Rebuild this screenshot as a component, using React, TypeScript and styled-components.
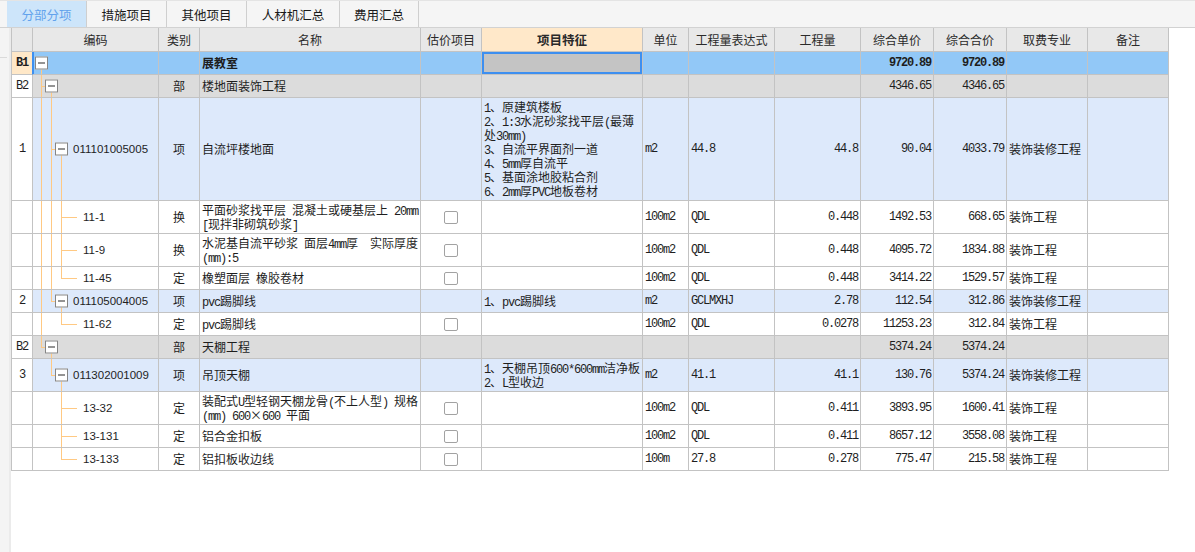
import React from "react"
import styled, { createGlobalStyle } from "styled-components"

const GlobalStyle = createGlobalStyle`
  html, body {
    margin: 0;
    padding: 0;
    background: #fff;
  }
  body {
    font-family: "Noto Sans CJK SC", "Liberation Sans", sans-serif;
    font-size: 12px;
    color: #1e1e1e;
  }
`

const COLS = [21, 126, 41, 221, 61, 161, 46, 86, 86, 73, 73, 81, 81]
const GRID = COLS.map(w => `${w}px`).join(" ")
const LINE = "#c3c3c3"
const GUIDE = "#ffc983"
const SELECT = "#3d8ff0"
const MONO = '"Liberation Mono", "Noto Sans CJK SC", monospace'

type Kind = "b1" | "b2" | "item" | "sub"
type Seg = [number, "full" | "top" | "bottom"]

type Tree = {
  v: Seg[]
  h?: [number, number]
  box?: number
}

type RowData = {
  kind: Kind
  no: string
  code?: string
  tree: Tree
  type?: string
  name: string
  check?: boolean
  feature?: string
  unit?: string
  expr?: string
  qty?: string
  price?: string
  total?: string
  fee?: string
  h: number
}

const rowBg: Record<Kind, string> = {
  b1: "#92c8f7",
  b2: "#dcdcdc",
  item: "#dde9fb",
  sub: "#ffffff",
}

const subTree = (v: Seg[]): Tree => ({ v, h: [28, 16] })

const rows: RowData[] = [
  { kind: "b1", no: "B1", tree: { v: [[8, "bottom"]], box: 2 }, name: "展教室", price: "9720.89", total: "9720.89", h: 23 },
  { kind: "b2", no: "B2", tree: { v: [[8, "full"], [18, "bottom"]], h: [8, 4], box: 12 }, type: "部", name: "楼地面装饰工程", price: "4346.65", total: "4346.65", h: 23 },
  {
    kind: "item", no: "1", code: "011101005005",
    tree: { v: [[8, "full"], [18, "full"], [28, "bottom"]], h: [18, 4], box: 22 },
    type: "项", name: "自流坪楼地面",
    feature: "1、原建筑楼板\n2、1:3水泥砂浆找平层(最薄\n处30mm)\n3、自流平界面剂一道\n4、5mm厚自流平\n5、基面涂地胶粘合剂\n6、2mm厚PVC地板卷材",
    unit: "m2", expr: "44.8", qty: "44.8", price: "90.04", total: "4033.79", fee: "装饰装修工程", h: 103,
  },
  {
    kind: "sub", no: "", code: "11-1", tree: subTree([[8, "full"], [18, "full"], [28, "full"]]),
    type: "换", name: "平面砂浆找平层 混凝土或硬基层上 20mm\n[现拌非砌筑砂浆]", check: true,
    unit: "100m2", expr: "QDL", qty: "0.448", price: "1492.53", total: "668.65", fee: "装饰工程", h: 33,
  },
  {
    kind: "sub", no: "", code: "11-9", tree: subTree([[8, "full"], [18, "full"], [28, "full"]]),
    type: "换", name: "水泥基自流平砂浆 面层4mm厚  实际厚度\n(mm):5", check: true,
    unit: "100m2", expr: "QDL", qty: "0.448", price: "4095.72", total: "1834.88", fee: "装饰工程", h: 33,
  },
  {
    kind: "sub", no: "", code: "11-45", tree: subTree([[8, "full"], [18, "full"], [28, "top"]]),
    type: "定", name: "橡塑面层 橡胶卷材", check: true,
    unit: "100m2", expr: "QDL", qty: "0.448", price: "3414.22", total: "1529.57", fee: "装饰工程", h: 23,
  },
  {
    kind: "item", no: "2", code: "011105004005",
    tree: { v: [[8, "full"], [18, "top"], [28, "bottom"]], h: [18, 4], box: 22 },
    type: "项", name: "pvc踢脚线", feature: "1、pvc踢脚线",
    unit: "m2", expr: "GCLMXHJ", qty: "2.78", price: "112.54", total: "312.86", fee: "装饰装修工程", h: 23,
  },
  {
    kind: "sub", no: "", code: "11-62", tree: subTree([[8, "full"], [28, "top"]]),
    type: "定", name: "pvc踢脚线", check: true,
    unit: "100m2", expr: "QDL", qty: "0.0278", price: "11253.23", total: "312.84", fee: "装饰工程", h: 23,
  },
  { kind: "b2", no: "B2", tree: { v: [[8, "top"], [18, "bottom"]], h: [8, 4], box: 12 }, type: "部", name: "天棚工程", price: "5374.24", total: "5374.24", h: 23 },
  {
    kind: "item", no: "3", code: "011302001009",
    tree: { v: [[18, "top"], [28, "bottom"]], h: [18, 4], box: 22 },
    type: "项", name: "吊顶天棚", feature: "1、天棚吊顶600*600mm洁净板\n2、L型收边",
    unit: "m2", expr: "41.1", qty: "41.1", price: "130.76", total: "5374.24", fee: "装饰装修工程", h: 33,
  },
  {
    kind: "sub", no: "", code: "13-32", tree: subTree([[28, "full"]]),
    type: "定", name: "装配式U型轻钢天棚龙骨(不上人型) 规格\n(mm) 600×600 平面", check: true,
    unit: "100m2", expr: "QDL", qty: "0.411", price: "3893.95", total: "1600.41", fee: "装饰工程", h: 33,
  },
  {
    kind: "sub", no: "", code: "13-131", tree: subTree([[28, "full"]]),
    type: "定", name: "铝合金扣板", check: true,
    unit: "100m2", expr: "QDL", qty: "0.411", price: "8657.12", total: "3558.08", fee: "装饰工程", h: 23,
  },
  {
    kind: "sub", no: "", code: "13-133", tree: subTree([[28, "top"]]),
    type: "定", name: "铝扣板收边线", check: true,
    unit: "100m", expr: "27.8", qty: "0.278", price: "775.47", total: "215.58", fee: "装饰工程", h: 23,
  },
]

const tabs = [
  { label: "分部分项", width: 80, active: true },
  { label: "措施项目", width: 80 },
  { label: "其他项目", width: 80 },
  { label: "人材机汇总", width: 93 },
  { label: "费用汇总", width: 79 },
]

const headers = ["", "编码", "类别", "名称", "估价项目", "项目特征", "单位", "工程量表达式", "工程量", "综合单价", "综合合价", "取费专业", "备注"]

const Page = styled.div`
  display: flex;
  flex-direction: column;
  width: 1195px;
  height: 552px;
  overflow: hidden;
`

const TabBar = styled.div`
  display: flex;
  height: 26px;
  padding-left: 7px;
  background: #f5f5f5;
  border-top: 1px solid #e4e4e4;
  border-bottom: 1px solid #d2d2d2;
`

const Tab = styled.div<{ $active?: boolean; $width: number }>`
  width: ${p => p.$width}px;
  box-sizing: border-box;
  display: flex;
  align-items: center;
  justify-content: center;
  border-right: 1px solid #cfcfcf;
  background: ${p => (p.$active ? "#cde5fa" : "transparent")};
  color: ${p => (p.$active ? "#62a2ec" : "#1a1a1a")};
  font-size: 12.5px;
`

const Body = styled.div`
  flex: 1;
  display: flex;
`

const SideStrip = styled.div`
  width: 9px;
  background: #f4f4f4;
  border-right: 2px solid #ebebeb;
  padding-top: 29px;
`

const Grip = styled.div`
  width: 7px;
  height: 1px;
  background: #dadada;
`

const Sheet = styled.div`
  flex: 1;
  background: #fff;
`

const Table = styled.div`
  width: fit-content;
  border-left: 1px solid ${LINE};
`

const Row = styled.div<{ $h: number }>`
  display: grid;
  grid-template-columns: ${GRID};
  height: ${p => p.$h}px;
`

const Cell = styled.div<{ $bg: string; $align?: "left" | "center" | "right"; $bold?: boolean; $mono?: boolean }>`
  position: relative;
  box-sizing: border-box;
  display: flex;
  align-items: center;
  justify-content: ${p => (p.$align === "center" ? "center" : p.$align === "right" ? "flex-end" : "flex-start")};
  padding: 0 2px;
  background: ${p => p.$bg};
  border-right: 1px solid ${LINE};
  border-bottom: 1px solid ${LINE};
  font-family: ${p => (p.$mono ? MONO : '"Noto Sans CJK SC", "Liberation Sans", sans-serif')};
  font-size: 12px;
  letter-spacing: ${p => (p.$mono ? "-1.2px" : "0")};
  font-weight: ${p => (p.$bold ? 700 : 400)};
  line-height: 14px;
  white-space: pre;
  overflow: hidden;
`

const Lines = styled.div`
  display: flex;
  flex-direction: column;
`

const TextLine = styled.div`
  height: 14px;
  line-height: 14px;
  overflow: visible;
`

const Latin = styled.span`
  font-family: ${MONO};
  letter-spacing: -1.2px;
  line-height: 12px;
`

const HeadCell = styled.div<{ $accent?: boolean }>`
  box-sizing: border-box;
  display: flex;
  align-items: center;
  justify-content: center;
  background: ${p => (p.$accent ? "#ffe8c9" : "#e8e8e8")};
  border-right: 1px solid ${LINE};
  border-bottom: 1px solid ${LINE};
  color: #2a2a2a;
  font-weight: ${p => (p.$accent ? 700 : 400)};
  font-size: ${p => (p.$accent ? "12.5px" : "12px")};
  white-space: nowrap;
`

const NoCell = styled(Cell)<{ $mark?: boolean }>`
  border-right-color: ${p => (p.$mark ? SELECT : LINE)};
`

const CodeCell = styled(Cell)<{ $indent: number; $mark?: boolean }>`
  padding-left: ${p => p.$indent}px;
  font-family: "Liberation Sans", "Noto Sans CJK SC", sans-serif;
  font-size: 11.5px;
  letter-spacing: 0;
  box-shadow: ${p => (p.$mark ? `inset 1px 0 0 ${SELECT}` : "none")};
`

const SelectedCell = styled(Cell)`
  background: #c4c4c4;
  box-shadow: inset 0 0 0 2px ${SELECT};
`

const VGuide = styled.span<{ $x: number; $seg: Seg[1] }>`
  position: absolute;
  left: ${p => p.$x}px;
  width: 1px;
  top: ${p => (p.$seg === "bottom" ? "50%" : "0")};
  bottom: ${p => (p.$seg === "top" ? "50%" : "-1px")};
  background: ${GUIDE};
`

const HGuide = styled.span<{ $x: number; $w: number }>`
  position: absolute;
  left: ${p => p.$x}px;
  width: ${p => p.$w}px;
  top: 50%;
  height: 1px;
  background: ${GUIDE};
`

const FoldBox = styled.span<{ $x: number }>`
  position: absolute;
  left: ${p => p.$x}px;
  top: 50%;
  transform: translateY(-50%);
  width: 13px;
  height: 13px;
  box-sizing: border-box;
  border: 1px solid #858585;
  background: #fff;
  display: flex;
  align-items: center;
  justify-content: center;
  z-index: 1;

  &::after {
    content: "";
    width: 7px;
    height: 1px;
    background: #2b2b2b;
  }
`

const CheckBox = styled.span`
  width: 14px;
  height: 13px;
  box-sizing: border-box;
  border: 1px solid #a2a2a2;
  border-radius: 2px;
  background: #fff;
`

// ASCII runs render half-width, like the song-style font in the original grid
const Mixed = ({ text }: { text?: string }) => {
  if (!text) return null
  return (
    <Lines>
      {text.split("\n").map((line, li) => (
        <TextLine key={li}>
          {line.split(/([\x21-\x7e ]+)/).map((part, i) =>
            /^[\x21-\x7e ]+$/.test(part) ? <Latin key={i}>{part}</Latin> : part
          )}
        </TextLine>
      ))}
    </Lines>
  )
}

const TreeGuides = ({ tree }: { tree: Tree }) => (
  <>
    {tree.v.map(([x, seg], i) => <VGuide key={i} $x={x} $seg={seg} />)}
    {tree.h && <HGuide $x={tree.h[0]} $w={tree.h[1]} />}
    {tree.box !== undefined && <FoldBox $x={tree.box} />}
  </>
)

const DataRow = ({ row }: { row: RowData }) => {
  const bg = rowBg[row.kind]
  const bold = row.kind === "b1"
  const indent = row.kind === "sub" ? 50 : 40

  return (
    <Row $h={row.h}>
      <NoCell $bg={row.kind === "b1" ? "#ffe8c8" : "#fff"} $align="center" $mono $bold={bold} $mark={bold}>
        {row.no}
      </NoCell>
      <CodeCell $bg={bg} $indent={indent} $mark={bold}>
        <TreeGuides tree={row.tree} />
        {row.code}
      </CodeCell>
      <Cell $bg={bg} $align="center">{row.type}</Cell>
      <Cell $bg={bg} $bold={bold}><Mixed text={row.name} /></Cell>
      <Cell $bg={bg} $align="center">{row.check && <CheckBox />}</Cell>
      {bold ? <SelectedCell $bg={bg} /> : <Cell $bg={bg}><Mixed text={row.feature} /></Cell>}
      <Cell $bg={bg} $mono>{row.unit}</Cell>
      <Cell $bg={bg} $mono>{row.expr}</Cell>
      <Cell $bg={bg} $mono $align="right">{row.qty}</Cell>
      <Cell $bg={bg} $mono $align="right" $bold={bold}>{row.price}</Cell>
      <Cell $bg={bg} $mono $align="right" $bold={bold}>{row.total}</Cell>
      <Cell $bg={bg}>{row.fee}</Cell>
      <Cell $bg={bg} />
    </Row>
  )
}

export default function App() {
  return (
    <>
      <GlobalStyle />
      <Page>
        <TabBar>
          {tabs.map(t => (
            <Tab key={t.label} $active={t.active} $width={t.width}>{t.label}</Tab>
          ))}
        </TabBar>
        <Body>
          <SideStrip>
            <Grip />
          </SideStrip>
          <Sheet>
            <Table>
              <Row $h={24}>
                {headers.map((h, i) => (
                  <HeadCell key={i} $accent={h === "项目特征"}>{h}</HeadCell>
                ))}
              </Row>
              {rows.map((r, i) => <DataRow key={i} row={r} />)}
            </Table>
          </Sheet>
        </Body>
      </Page>
    </>
  )
}
